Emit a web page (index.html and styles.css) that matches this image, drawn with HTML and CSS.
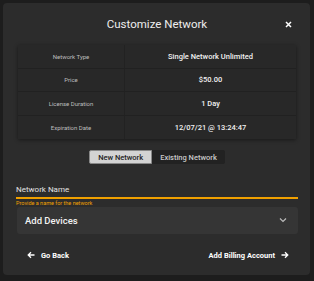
FILE: index.html
```html
<!DOCTYPE html>
<html lang="en">
<head>
    <meta charset="UTF-8">
    <title>Customize Network</title>
    <link rel="stylesheet" href="styles.css">
</head>
<body>
    <div class="dialog">
        <!-- Header -->
        <div class="dialog-header">
            <h2>Customize Network</h2>
            <button class="close-btn">
                <svg width="7" height="7" viewBox="0 0 7 7"><path d="M1 1 L6 6 M6 1 L1 6" stroke="#fff" stroke-width="1.5"/></svg>
            </button>
        </div>

        <!-- License summary -->
        <div class="summary">
            <div class="row">
                <div class="cell label">Network Type</div>
                <div class="cell value">Single Network Unlimited</div>
            </div>
            <div class="row">
                <div class="cell label">Price</div>
                <div class="cell value">$50.00</div>
            </div>
            <div class="row">
                <div class="cell label">License Duration</div>
                <div class="cell value">1 Day</div>
            </div>
            <div class="row">
                <div class="cell label">Expiration Date</div>
                <div class="cell value">12/07/21 @ 13:24:47</div>
            </div>
        </div>

        <!-- Network choice -->
        <div class="toggle">
            <button class="toggle-btn active">New Network</button>
            <button class="toggle-btn">Existing Network</button>
        </div>

        <div class="field">
            <div class="field-label">Network Name</div>
            <div class="field-line"></div>
            <div class="field-hint">Provide a name for the network</div>
        </div>

        <div class="expander">
            <span>Add Devices</span>
            <svg width="8" height="6" viewBox="0 0 8 6"><path d="M1 1.5 L4 4.5 L7 1.5" fill="none" stroke="#bbb" stroke-width="1.2"/></svg>
        </div>

        <div class="actions">
            <button class="action">
                <svg width="8" height="8" viewBox="0 0 8 8"><path d="M7.5 4 H1.2 M4 1.2 L1.2 4 L4 6.8" fill="none" stroke="#fff" stroke-width="1.3"/></svg>
                Go Back
            </button>
            <button class="action">
                Add Billing Account
                <svg width="8" height="8" viewBox="0 0 8 8"><path d="M0.5 4 H6.8 M4 1.2 L6.8 4 L4 6.8" fill="none" stroke="#fff" stroke-width="1.3"/></svg>
            </button>
        </div>
    </div>
</body>
</html>
```

FILE: styles.css
```css
body {
    margin: 0;
    height: 281px;
    background: #1d1d1d;
    font-family: Roboto, "Liberation Sans", sans-serif;
    color: #eee;
    padding: 3px;
    box-sizing: border-box;
    overflow: hidden;
}

.dialog {
    width: 307px;
    height: 272px;
    background: #2c2c2c;
    border-radius: 4px;
    box-sizing: border-box;
    padding: 0 12px 0 13px;
}

.dialog-header {
    position: relative;
    height: 42px;
    display: flex;
    align-items: center;
    justify-content: center;
}

.dialog-header h2 {
    margin: 0;
    font-size: 11.5px;
    font-weight: 400;
    color: #eee;
}

.close-btn {
    position: absolute;
    right: 6px;
    top: 18px;
    background: none;
    border: none;
    padding: 0;
    display: flex;
}

.summary {
    margin: 0 2px;
    background: #282828;
    box-shadow: 0 1px 4px rgba(0, 0, 0, 0.45);
}

.row {
    display: flex;
    height: 23.5px;
    border-bottom: 1px solid #212121;
    box-sizing: border-box;
}

.row:last-child {
    border-bottom: none;
}

.cell {
    display: flex;
    align-items: center;
    justify-content: center;
}

.label {
    width: 106px;
    border-right: 1px solid #222;
    font-size: 6px;
    color: #bdbdbd;
}

.value {
    flex: 1;
    font-size: 7.5px;
    font-weight: 500;
    color: #f2f2f2;
}

.toggle {
    display: flex;
    justify-content: center;
    margin-top: 11px;
}

.toggle-btn {
    height: 14px;
    padding: 0 8px;
    border: none;
    font-family: inherit;
    font-size: 7.5px;
    font-weight: 500;
    white-space: nowrap;
    background: #222;
    color: #c8c8c8;
    border-radius: 0 2px 2px 0;
}

.toggle-btn.active {
    background: #d3d3d3;
    color: #222;
    border: 1px solid #888;
    border-radius: 2px 0 0 2px;
}

.field {
    margin-top: 21px;
}

.field-label {
    font-size: 8px;
    color: #e2e2e2;
    height: 12px;
}

.field-line {
    height: 1.5px;
    background: #f0a000;
}

.field-hint {
    font-size: 5.5px;
    color: #f0a000;
    margin-top: 1px;
}

.expander {
    margin: 1px 0 0 1px;
    height: 27px;
    background: #353535;
    border-radius: 3px;
    display: flex;
    align-items: center;
    justify-content: space-between;
    padding: 0 11px 0 8px;
    font-size: 9.5px;
    font-weight: 500;
    color: #f2f2f2;
}

.actions {
    display: flex;
    justify-content: space-between;
    padding: 0 9px 0 11px;
    margin-top: 17px;
}

.action {
    display: flex;
    align-items: center;
    gap: 6px;
    background: none;
    border: none;
    padding: 0;
    color: #fff;
    font-family: inherit;
    font-size: 7.5px;
    font-weight: 700;
}
```
